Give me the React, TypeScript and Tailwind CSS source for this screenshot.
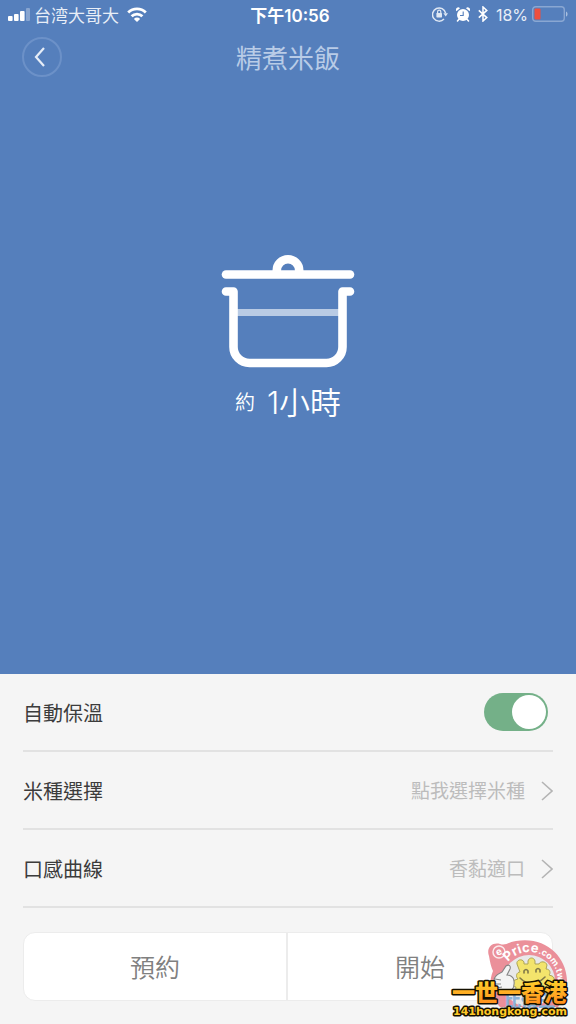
import React, { useState } from 'react';

const SignalIcon = () => (
  <svg width="22" height="14" viewBox="0 0 22 14" fill="white" aria-hidden="true">
    <rect x="0" y="9" width="4.6" height="5" rx="1" />
    <rect x="6" y="7" width="4.6" height="7" rx="1" />
    <rect x="12" y="4" width="4.6" height="10" rx="1" />
    <rect x="18" y="1" width="4" height="13" rx="1" opacity="0.3" />
  </svg>
);

const WifiIcon = () => (
  <svg width="20" height="15" viewBox="0 0 20 15" fill="none" stroke="white" strokeWidth="2.8" aria-hidden="true">
    <path d="M1.2 5.6a12.4 12.4 0 0 1 17.6 0" />
    <path d="M4.6 9.3a7.6 7.6 0 0 1 10.8 0" />
    <path d="M10 15 6.9 11.9a4.3 4.3 0 0 1 6.2 0Z" fill="white" stroke="none" />
  </svg>
);

const RotationLockIcon = () => (
  <svg width="16" height="16" viewBox="0 0 16 16" fill="none" stroke="#dfe8f4" strokeWidth="1.5" aria-hidden="true">
    <path d="M12 13A6.6 6.6 0 1 1 13.6 7.2" />
    <path d="M11.4 7.2h4.6l-2.3 3.3Z" fill="#dfe8f4" stroke="none" />
    <rect x="4.4" y="7" width="5.6" height="4.4" rx="0.6" fill="#dfe8f4" stroke="none" />
    <path d="M5.6 7.4V5.8a1.6 1.6 0 0 1 3.2 0v1.6" strokeWidth="1.2" />
  </svg>
);

const AlarmIcon = () => (
  <svg width="14" height="15" viewBox="0 0 14 15" aria-hidden="true">
    <circle cx="7" cy="8" r="6" fill="white" />
    <path d="M.4 4.2A2.3 2.3 0 0 1 4 1.2M13.6 4.2A2.3 2.3 0 0 0 10 1.2" fill="white" />
    <path d="M2.8 12.4 1.5 14M11.2 12.4l1.3 1.6" stroke="white" strokeWidth="1.6" strokeLinecap="round" />
    <path d="M7.2 4.4V8.5H4" fill="none" stroke="#557fbc" strokeWidth="1.1" />
  </svg>
);

const BluetoothIcon = () => (
  <svg width="10" height="16" viewBox="0 0 10 16" fill="none" stroke="white" strokeWidth="1.5" aria-hidden="true">
    <path d="m.8 4.4 8 7.2L5 15V1l3.8 3.4-8 7.2" />
  </svg>
);

const BatteryIcon = () => (
  <svg width="36" height="16" viewBox="0 0 36 16" aria-hidden="true">
    <rect x="0.7" y="0.7" width="31.6" height="14.6" rx="3" fill="none" stroke="#8aa7d2" strokeWidth="1.4" />
    <rect x="2.5" y="2.5" width="6" height="11" rx="1" fill="#ee4f3f" />
    <path d="M34 5.4c2 .8 2 4.4 0 5.2Z" fill="#a9bfdf" />
  </svg>
);

const PotIcon = () => (
  <svg width="134" height="114" viewBox="0 0 134 114" fill="none" stroke="white" strokeWidth="8.6" strokeLinecap="round" strokeLinejoin="round" aria-hidden="true">
    <path d="M16 58.5H118" stroke="#b9cbe4" strokeWidth="7" strokeLinecap="butt" />
    <path d="M5 20.5H129" />
    <path d="M55.8 18V16.5a11.2 11.2 0 0 1 22.4 0V18" strokeLinecap="butt" />
    <path d="M5 37.5h7.5V93a16 16 0 0 0 16 16h77a16 16 0 0 0 16-16V37.5H129" />
  </svg>
);

const Chevron = () => (
  <svg width="12" height="20" viewBox="0 0 12 20" fill="none" stroke="#b4b4b4" strokeWidth="1.6" aria-hidden="true">
    <path d="m1 1 10 9-10 9" />
  </svg>
);

const Watermark = () => (
  <svg className="pointer-events-none absolute right-0 bottom-0" width="126" height="88" viewBox="450 936 126 88" aria-hidden="true">
    <defs>
      <linearGradient id="gold" x1="0" y1="0" x2="0" y2="1">
        <stop offset="0.2" stopColor="#ffd02b" />
        <stop offset="0.9" stopColor="#ff8c1c" />
      </linearGradient>
      <path id="badge-arc" d="M508 962A28 28 0 0 1 556 989" />
    </defs>
    <g opacity="0.9">
      <path d="M489 956c-3-8 3-14 11-12 6 2 8-2 16-3 28-5 50 14 51 39 0 11-3 20-9 27h-58c-10-10-12-24-7-36-2-4-3-9-4-15Z" fill="#e98490" />
      <circle cx="529" cy="981" r="26" fill="#e6e6e8" />
      <circle cx="499" cy="952" r="6" fill="none" stroke="#fbe9eb" strokeWidth="1.5" />
      <text x="496" y="955" fontSize="10" fontWeight="700" fontFamily="Inter, sans-serif" fill="#fff" transform="rotate(-25 499 952)">e</text>
      <text fontWeight="700" fontFamily="Inter, sans-serif" fill="#fff">
        <textPath href="#badge-arc">
          <tspan fontSize="13">Price</tspan>
          <tspan fontSize="9">.com.tw</tspan>
        </textPath>
      </text>
      <path d="M517 964c-1-4 5-6 7-2v2h4v-3c1-4 6-4 7 0v3h4c1-3 7-3 8 1l-1 4c4 0 5 4 3 6l3 1c4 2 2 7-1 7l-2 1c2 6-2 9-6 8-8 5-14 5-20 1-6 1-8-3-7-6-4 0-5-6-1-7l3-1c-3-3-1-7 2-7Z" fill="#f2e25d" stroke="#a59b45" strokeWidth="1" />
      <path d="M524 973v-2q2-3 4 0v2M536 972v-2q2-3 4 0v2M520 978q12 12 25-1" fill="none" stroke="#736b36" strokeWidth="1.6" strokeLinecap="round" />
      <path d="M506 966c3-2 5 0 4 3l-3 6c3 0 7 2 7 6 1 7-3 12-9 12-7 0-12-5-11-12 0-5 4-7 8-9Z" fill="#f3f3f3" stroke="#777" strokeWidth="1.1" />
      <path d="m495 979 6 1m-6 4 6 0m-4 4 5-1" fill="none" stroke="#777" strokeWidth="1" />
      <text x="504" y="1007" fontSize="17" fontWeight="900" fontFamily="'Noto Sans CJK TC', sans-serif" fill="#7eaad5">比價王</text>
    </g>
    <g stroke="#141000" strokeWidth="3" paintOrder="stroke" strokeLinejoin="round">
      <text x="452" y="1001" fontSize="23" fontWeight="900" fontFamily="'Noto Sans CJK TC', sans-serif" fill="url(#gold)">一世一香港</text>
      <text x="453" y="1015" fontSize="11" fontWeight="700" fontFamily="'DejaVu Sans', sans-serif" fill="#ffc928">141hongkong.com</text>
    </g>
  </svg>
);

interface OptionRowProps {
  label: string;
  value: string;
}

const OptionRow: React.FC<OptionRowProps> = ({ label, value }) => (
  <button type="button" className="flex h-[78px] w-full items-center border-b-2 border-[#e2e2e2] text-left">
    <span className="pt-1 text-xl text-[#3c3c3c]">{label}</span>
    <span className="ml-auto pt-1 text-[19px] text-[#bcbcbc]">{value}</span>
    <span className="ml-4 pt-0.5">
      <Chevron />
    </span>
  </button>
);

const options: OptionRowProps[] = [
  { label: '米種選擇', value: '點我選擇米種' },
  { label: '口感曲線', value: '香黏適口' },
];

export default function App() {
  const [keepWarm, setKeepWarm] = useState(true);

  return (
    <div lang="zh-TW" className="relative flex min-h-screen flex-col bg-[#f5f5f5] font-['Inter','Noto_Sans_CJK_TC',sans-serif]">
      <main className="flex flex-1 flex-col bg-[#557fbc] text-white">
        {/* Status bar */}
        <div className="grid h-7 grid-cols-[1fr_auto_1fr] items-center px-2 text-[17px] leading-6">
          <div className="flex items-center">
            <SignalIcon />
            <span className="mr-2 ml-1 pt-1 text-[#e8eef7]">台湾大哥大</span>
            <WifiIcon />
          </div>
          <span className="pt-1 pl-1 font-semibold">下午10:56</span>
          <div className="flex items-center justify-end">
            <RotationLockIcon />
            <span className="mx-2"><AlarmIcon /></span>
            <BluetoothIcon />
            <span className="mr-1 ml-2 pt-0.5 text-base text-[#e8eef7]">18%</span>
            <BatteryIcon />
          </div>
        </div>

        {/* Title bar */}
        <header className="grid grid-cols-[1fr_auto_1fr] items-center px-[22px] pt-[9px]">
          <button type="button" aria-label="返回" className="flex size-10 items-center justify-center rounded-full border-2 border-[#6c91c8]">
            <svg className="mr-1" width="12" height="20" viewBox="0 0 12 20" fill="none" stroke="#e6edf7" strokeWidth="2.2" aria-hidden="true">
              <path d="m10 1-8 9 8 9" />
            </svg>
          </button>
          <h1 className="pt-1 text-[26px] leading-9 text-[#b9cce7]">精煮米飯</h1>
        </header>

        {/* Cooking estimate */}
        <div className="flex flex-1 flex-col items-center justify-center pb-[72px]">
          <PotIcon />
          <p className="mt-3 flex items-center gap-3 leading-[46px] font-[350]">
            <span className="text-xl">約</span>
            <span className="text-[31px]">1小時</span>
          </p>
        </div>
      </main>

      <section className="px-[23px] pb-[23px]">
        <label className="flex h-[78px] items-center justify-between border-b-2 border-[#e2e2e2]">
          <span className="pt-1 text-xl text-[#3c3c3c]">自動保溫</span>
          <input
            type="checkbox"
            role="switch"
            checked={keepWarm}
            onChange={(e) => setKeepWarm(e.target.checked)}
            className="mr-[5px] flex h-[38px] w-16 appearance-none items-center rounded-full bg-[#c9c9c9] p-0.5 before:size-[34px] before:rounded-full before:bg-white checked:justify-end checked:bg-[#74b088]"
          />
        </label>
        {options.map((option) => (
          <OptionRow key={option.label} {...option} />
        ))}

        <div className="mt-6 grid grid-cols-2 divide-x-2 divide-[#ececec] overflow-hidden rounded-xl border border-[#ececec] bg-white text-[25px] font-[350] text-[#808080]">
          <button type="button" className="h-[67px] pt-1">預約</button>
          <button type="button" className="h-[67px] pt-1">開始</button>
        </div>
      </section>

      <Watermark />
    </div>
  );
}
